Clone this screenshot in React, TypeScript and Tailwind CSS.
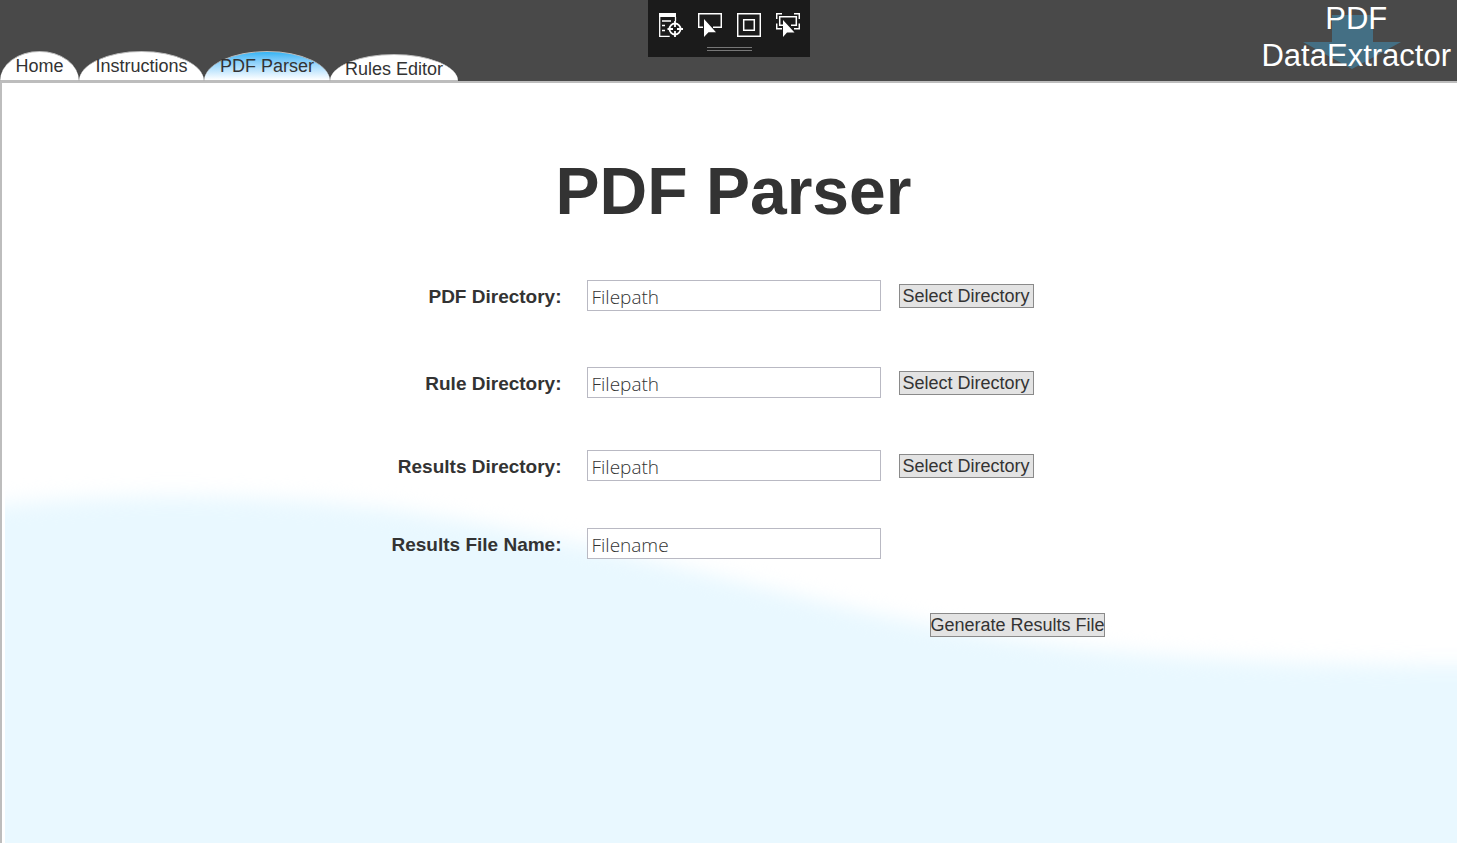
import React from "react";

type Tab = { label: string; className: string };

const tabs: Tab[] = [
  { label: "Home", className: "h-7 w-[79px] bg-white" },
  { label: "Instructions", className: "h-7 w-[125px] bg-white" },
  { label: "PDF Parser", className: "h-7 w-[126px] bg-linear-to-b from-[#2fb4f5] to-white" },
  { label: "Rules Editor", className: "h-[25px] w-[128px] bg-white" },
];

const fields = [
  { id: "pdf-dir", label: "PDF Directory:", value: "Filepath", browse: true, space: "mb-14" },
  { id: "rule-dir", label: "Rule Directory:", value: "Filepath", browse: true, space: "mb-[52px]" },
  { id: "results-dir", label: "Results Directory:", value: "Filepath", browse: true, space: "mb-[47px]" },
  { id: "results-name", label: "Results File Name:", value: "Filename", browse: false, space: "mb-[54px]" },
];

const buttonStyle =
  "h-6 border border-[#8a8a8a] bg-[#e3e3e3] text-center text-lg leading-[22px] whitespace-nowrap text-[#333]";

function TreeIcon() {
  return (
    <svg width="24" height="24" viewBox="0 0 24 24" fill="none" stroke="#fff">
      <path d="M0 0h17v4H0z" fill="#fff" stroke="none" />
      <path d="M.7 4v19.300h10M16.500 4v4" strokeWidth="1.300" />
      <path d="M3 8h9M3 12.500h3M3 17.500h3" strokeWidth="1.500" />
      <circle cx="16" cy="16" r="5.500" strokeWidth="1.800" />
      <path d="M16 8v6M16 18v6M8.500 16H14M18 16h6" strokeWidth="1.800" />
    </svg>
  );
}

function SelectIcon() {
  return (
    <svg width="24" height="24" viewBox="0 0 24 24" fill="none">
      <path d="M5 14.300H.7V.7h22.600v13.600H15" stroke="#fff" strokeWidth="1.500" />
      <path d="M6 6v18l4.500-4.800H18z" fill="#fff" />
    </svg>
  );
}

function AdornerIcon() {
  return (
    <svg width="24" height="24" viewBox="0 0 24 24" fill="none" stroke="#fff" strokeWidth="1.500">
      <path d="M.7.7h22.600v22.600H.7zM6.700 6.700h10.600v10.600H6.700z" />
    </svg>
  );
}

function FocusIcon() {
  return (
    <svg width="24" height="24" viewBox="0 0 24 24" fill="none" stroke="#fff" strokeWidth="1.500">
      <path d="M.7 6V.7H6M18 .7h5.300V6M.7 10.500v5.300H6M23.300 10.500v5.300H18" />
      <path d="M7 12.300H3.700V3.700h16.600v8.600H15" />
      <path d="M7 7v17l4-4.600h7.500z" fill="#fff" stroke="none" />
    </svg>
  );
}

function DebugToolbar() {
  const items = [
    { name: "Go to Live Visual Tree", icon: <TreeIcon /> },
    { name: "Select Element", icon: <SelectIcon /> },
    { name: "Display Layout Adorners", icon: <AdornerIcon /> },
    { name: "Track Focused Element", icon: <FocusIcon /> },
  ];
  return (
    <div className="absolute top-0 left-1/2 flex h-[57px] w-[162px] -translate-x-1/2 flex-col items-center bg-[#1b1b1b] pt-[13px] pl-0.5">
      <div className="flex gap-[15px]">
        {items.map((i) => (
          <button key={i.name} type="button" aria-label={i.name}>
            {i.icon}
          </button>
        ))}
      </div>
      <div className="mt-[10px] h-1 w-[45px] border-y border-[#777]" />
    </div>
  );
}

function Logo() {
  return (
    <div className="relative flex h-[81px] flex-col items-center pr-[6px] text-[31px] text-white">
      <svg className="absolute top-[15px] left-[42px]" width="98" height="54" viewBox="0 0 98 54">
        <path d="M29 0h41v27h28L49 54 0 27h29z" fill="#446f84" />
      </svg>
      <span className="relative leading-[37px]">PDF</span>
      <span className="relative leading-[37px]">DataExtractor</span>
    </div>
  );
}

export default function App() {
  return (
    <div className="relative flex min-h-screen flex-col bg-white font-['Liberation_Sans',Arial,sans-serif] text-[#333]">
      <header className="flex h-[81px] justify-between bg-[#494949]">
        <nav className="flex items-end">
          {tabs.map((t) => (
            <a
              key={t.label}
              href="#"
              className={`box-content rounded-[50%_50%_0_0/100%_100%_0_0] border-t border-b border-[#bdbdbd] text-center text-lg leading-7 whitespace-nowrap ${t.className}`}
            >
              {t.label}
            </a>
          ))}
        </nav>
        <Logo />
      </header>
      <DebugToolbar />

      <main className="relative flex-1 border-t-2 border-l-2 border-[#bdbdbd] pl-2">
        <svg
          className="absolute inset-y-0 right-0 left-[3px] h-full w-[calc(100%-3px)]"
          viewBox="0 0 1452 760"
          preserveAspectRatio="none"
          aria-hidden="true"
        >
          <defs>
            <filter id="soft" x="-10%" y="-20%" width="120%" height="140%" colorInterpolationFilters="sRGB">
              <feGaussianBlur stdDeviation="10" />
            </filter>
          </defs>
          <path
            d="M-60 429C60 410 250 407 400 428C560 451 760 508 900 537C1080 574 1250 583 1520 582V840H-60Z"
            fill="#e9f8ff"
            filter="url(#soft)"
          />
        </svg>

        <form className="relative pt-[69px]" onSubmit={(e) => e.preventDefault()}>
          <h1 className="mb-[50px] text-center text-[66px] leading-[78px] font-bold whitespace-nowrap">
            PDF Parser
          </h1>
          {fields.map((f) => (
            <div key={f.id} className={`grid grid-cols-[1fr_294px_1fr] items-center gap-x-[18px] ${f.space}`}>
              <label htmlFor={f.id} className="pt-0.5 pr-[7px] text-right text-[19px] leading-7 font-bold whitespace-nowrap">
                {f.label}
              </label>
              <input
                id={f.id}
                defaultValue={f.value}
                className="h-[31px] w-full border border-[#b9b9c3] bg-white px-1 pt-0.5 font-['Open_Sans',sans-serif] text-[19px] leading-6 font-light outline-none"
              />
              {f.browse && (
                <button type="button" className={`w-[135px] ${buttonStyle}`}>
                  Select Directory
                </button>
              )}
            </div>
          ))}
          <div className="grid grid-cols-[1fr_294px_1fr] gap-x-[18px]">
            <button type="submit" className={`col-start-3 ml-[31px] w-[175px] ${buttonStyle}`}>
              Generate Results File
            </button>
          </div>
        </form>
      </main>
    </div>
  );
}
